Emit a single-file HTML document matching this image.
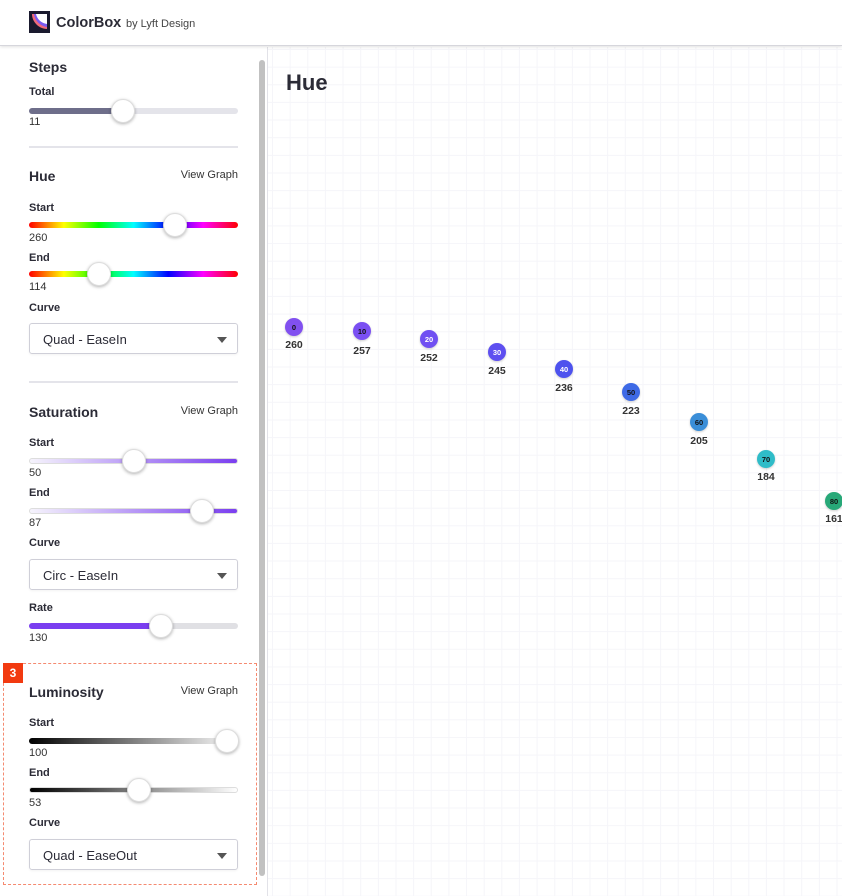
<!DOCTYPE html>
<html><head><meta charset="utf-8">
<style>
*{box-sizing:border-box;margin:0;padding:0}
body{width:842px;height:896px;overflow:hidden;background:#fff;font-family:"Liberation Sans",sans-serif;color:#2b2b36;position:relative}
.a{position:absolute}
.hdr{left:0;top:0;width:842px;height:46px;background:#fff;border-bottom:1px solid #d6d6dc;box-shadow:0 1px 3px rgba(0,0,0,.12);z-index:5}
.side{left:0;top:47px;width:256px;height:849px;background:#fff}
.sb{left:259px;top:60px;width:6px;height:816px;background:#c1c1c1;border-radius:3px}
.sbl{left:267px;top:47px;width:1px;height:849px;background:#e2e2e8}
.main{left:268px;top:47px;width:574px;height:849px;
background-color:#fff;
background-image:linear-gradient(to right,#f5f5f9 1px,transparent 1px),linear-gradient(to bottom,#f5f5f9 1px,transparent 1px);
background-size:17.65px 17.65px;background-position:4px 2px}
.t{font-weight:bold;font-size:14px;left:29px}
.lb{font-weight:bold;font-size:11px;left:29px}
.v{font-size:11px;left:29px;color:#333}
.vg{font-size:11px;right:604px;color:#333}
.tr{left:29px;width:209px;height:6px;border-radius:3px}
.th{width:24px;height:24px;border-radius:50%;background:#fff;box-shadow:0 1px 3px rgba(0,0,0,.3);border:1px solid #ddd}
.sel{left:29px;width:209px;height:31px;border:1px solid #cfcfd8;border-radius:3px;font-size:13px;padding:8px 0 0 13px;box-shadow:0 1px 2px rgba(0,0,0,.05)}
.sel:after{content:"";position:absolute;right:10px;top:13px;border-left:5px solid transparent;border-right:5px solid transparent;border-top:6px solid #555}
.hr{left:29px;width:209px;height:2px;background:#e4e4ea}
.pt{width:18px;height:18px;border-radius:50%;font-size:7.5px;font-weight:bold;display:flex;align-items:center;justify-content:center;color:#111;box-shadow:0 1px 2px rgba(0,0,0,.2)}
.pl{font-size:10.5px;font-weight:bold;width:40px;text-align:center;color:#333}
</style></head><body>
<div class="a hdr">
 <svg class="a" style="left:29px;top:11px" width="21" height="22" viewBox="0 0 21 22"><rect width="21" height="22" fill="#1a1a2e"/><path d="M3 3h15v15C10 18 3 11 3 3z" fill="#f06a7a"/><path d="M5 3h13v13C11 15 6 10 5 3z" fill="#7a5af0"/><path d="M7 3h11v10C12 12 8 8 7 3z" fill="#fff"/></svg>
 <div class="a" style="left:56px;top:15px;font-size:14.5px;font-weight:bold">ColorBox</div>
 <div class="a" style="left:126px;top:18px;font-size:11px;color:#444">by Lyft Design</div>
</div>
<div class="a side"></div>
<div class="a sb"></div><div class="a sbl"></div>
<div class="a main"></div>
<div class="a" style="left:286px;top:70px;font-size:22px;font-weight:bold">Hue</div>

<div class="a t" style="top:59px">Steps</div>
<div class="a lb" style="top:86px">Total</div>
<div class="a tr" style="top:108px;background:linear-gradient(to right,#6e6e8a 0 45%,#e4e4ea 45%)"></div>
<div class="a th" style="left:111px;top:99px"></div>
<div class="a v" style="top:116px">11</div>
<div class="a hr" style="top:146px"></div>

<div class="a t" style="top:168px">Hue</div><div class="a vg" style="top:169px">View Graph</div>
<div class="a lb" style="top:202px">Start</div>
<div class="a tr" style="top:222px;background:linear-gradient(to right,#f00,#ff0,#0f0,#0ff,#00f,#f0f,#f00)"></div>
<div class="a th" style="left:163px;top:213px"></div>
<div class="a v" style="top:232px">260</div>
<div class="a lb" style="top:252px">End</div>
<div class="a tr" style="top:271px;background:linear-gradient(to right,#f00,#ff0,#0f0,#0ff,#00f,#f0f,#f00)"></div>
<div class="a th" style="left:87px;top:262px"></div>
<div class="a v" style="top:281px">114</div>
<div class="a lb" style="top:302px">Curve</div>
<div class="a sel" style="top:323px">Quad - EaseIn</div>
<div class="a hr" style="top:381px"></div>

<div class="a t" style="top:404px">Saturation</div><div class="a vg" style="top:405px">View Graph</div>
<div class="a lb" style="top:437px">Start</div>
<div class="a tr" style="top:458px;background:linear-gradient(to right,#f6f4fc,#7a3ef0);border:1px solid #ddd"></div>
<div class="a th" style="left:122px;top:449px"></div>
<div class="a v" style="top:467px">50</div>
<div class="a lb" style="top:487px">End</div>
<div class="a tr" style="top:508px;background:linear-gradient(to right,#f6f4fc,#7a3ef0);border:1px solid #ddd"></div>
<div class="a th" style="left:190px;top:499px"></div>
<div class="a v" style="top:517px">87</div>
<div class="a lb" style="top:537px">Curve</div>
<div class="a sel" style="top:559px">Circ - EaseIn</div>
<div class="a lb" style="top:602px">Rate</div>
<div class="a tr" style="top:623px;background:linear-gradient(to right,#7a3ef0 0 60%,#e0e0e4 60%)"></div>
<div class="a th" style="left:149px;top:614px"></div>
<div class="a v" style="top:632px">130</div>

<div class="a" style="left:3px;top:663px;width:254px;height:222px;border:1px dashed #f58a70"></div>
<div class="a" style="left:3px;top:663px;width:20px;height:20px;background:#f23a10;color:#fff;font-size:12px;font-weight:bold;text-align:center;line-height:20px">3</div>
<div class="a t" style="top:684px">Luminosity</div><div class="a vg" style="top:685px">View Graph</div>
<div class="a lb" style="top:717px">Start</div>
<div class="a tr" style="top:738px;background:linear-gradient(to right,#000,#fff)"></div>
<div class="a th" style="left:215px;top:729px"></div>
<div class="a v" style="top:747px">100</div>
<div class="a lb" style="top:767px">End</div>
<div class="a tr" style="top:787px;background:linear-gradient(to right,#000,#fff);border:1px solid #ddd"></div>
<div class="a th" style="left:127px;top:778px"></div>
<div class="a v" style="top:797px">53</div>
<div class="a lb" style="top:817px">Curve</div>
<div class="a sel" style="top:839px">Quad - EaseOut</div>

<div class="a pt" style="left:285px;top:318px;background:#8150f0">0</div><div class="a pl" style="left:274px;top:339px">260</div>
<div class="a pt" style="left:353px;top:322px;background:#7a4ff2">10</div><div class="a pl" style="left:342px;top:345px">257</div>
<div class="a pt" style="left:420px;top:330px;background:#7050f2;color:#fff">20</div><div class="a pl" style="left:409px;top:352px">252</div>
<div class="a pt" style="left:488px;top:343px;background:#5e4ff0;color:#fff">30</div><div class="a pl" style="left:477px;top:365px">245</div>
<div class="a pt" style="left:555px;top:360px;background:#4d52ee;color:#fff">40</div><div class="a pl" style="left:544px;top:382px">236</div>
<div class="a pt" style="left:622px;top:383px;background:#3e6ae6">50</div><div class="a pl" style="left:611px;top:405px">223</div>
<div class="a pt" style="left:690px;top:413px;background:#3a8ed8">60</div><div class="a pl" style="left:679px;top:435px">205</div>
<div class="a pt" style="left:757px;top:450px;background:#2fbcc8">70</div><div class="a pl" style="left:746px;top:471px">184</div>
<div class="a pt" style="left:825px;top:492px;background:#27a878">80</div><div class="a pl" style="left:814px;top:513px">161</div>
</body></html>
